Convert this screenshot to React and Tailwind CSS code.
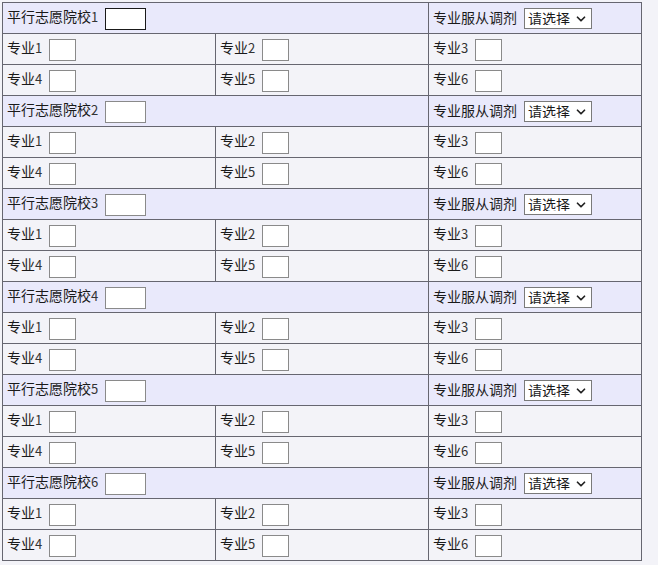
import { ChevronDown } from "lucide-react";

const schools = [1, 2, 3, 4, 5, 6];

const Box = ({ wide, focused }) => (
  <input
    type="text"
    className={
      "ml-[7px] h-[22px] bg-white align-middle outline-none border " +
      (wide ? "w-[41px] " : "w-[27px] ") +
      (focused ? "border-[#1a1a1a]" : "border-[#8a8a8a]")
    }
  />
);

const Major = ({ n }) => (
  <td className="h-[31px] border border-[#666670] px-[4px] align-middle">
    <span>专业</span>
    <span className="text-[13px] text-[#333]">{n}</span>
    <Box />
  </td>
);

function App() {
  return (
    <div
      className="min-h-[565px] bg-[#f3f3f8] p-[2px] text-[14px] text-[#1a1a1a]"
      style={{ fontFamily: '"Noto Sans CJK SC", "Noto Sans", sans-serif' }}
    >
      <table className="w-[639px] table-fixed border-collapse border border-[#666670]">
        <colgroup>
          <col className="w-[213px]" />
          <col className="w-[213px]" />
          <col className="w-[213px]" />
        </colgroup>
        <tbody>
          {schools.map((s) => [
            <tr key={"h" + s} className="bg-[#e9e9fb]">
              <td
                colSpan={2}
                className="h-[31px] border border-[#666670] px-[4px] align-middle"
              >
                <span>平行志愿院校</span>
                <span className="text-[13px] text-[#333]">{s}</span>
                <Box wide focused={s === 1} />
              </td>
              <td className="h-[31px] border border-[#666670] px-[4px] align-middle">
                <span>专业服从调剂</span>
                <span className="relative ml-[7px] inline-block align-middle">
                  <select className="h-[21px] w-[68px] appearance-none border border-[#7a7a7a] bg-white pl-[3px] text-[14px] leading-none outline-none">
                    <option>请选择</option>
                    <option>是</option>
                    <option>否</option>
                  </select>
                  <ChevronDown
                    size={14}
                    strokeWidth={3}
                    className="pointer-events-none absolute right-[4px] top-[4px] text-[#222]"
                  />
                </span>
              </td>
            </tr>,
            <tr key={"a" + s}>
              <Major n={1} />
              <Major n={2} />
              <Major n={3} />
            </tr>,
            <tr key={"b" + s}>
              <Major n={4} />
              <Major n={5} />
              <Major n={6} />
            </tr>,
          ])}
        </tbody>
      </table>
    </div>
  );
}

export default App;
